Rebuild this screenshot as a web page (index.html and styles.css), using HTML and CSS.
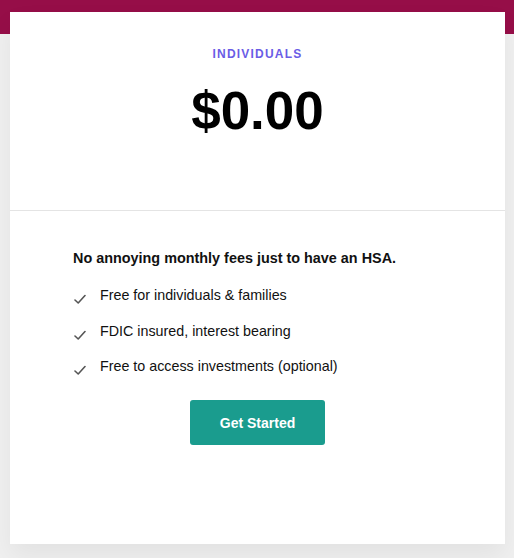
FILE: index.html
```html
<!DOCTYPE html>
<html>
<head>
<meta charset="utf-8">
<link rel="stylesheet" href="styles.css">
</head>
<body>
<div class="band"></div>
<main class="card">
  <section class="top">
    <div class="tier">INDIVIDUALS</div>
    <div class="price">$0.00</div>
  </section>
  <section class="bottom">
    <h2 class="lead">No annoying monthly fees just to have an HSA.</h2>
    <ul class="features">
      <li><svg class="check" viewBox="0 0 12 10" width="12" height="10"><path d="M1 6 L4.2 9 L11 1.5" fill="none" stroke="#555" stroke-width="1.6" stroke-linecap="round" stroke-linejoin="round"/></svg><span>Free for individuals &amp; families</span></li>
      <li><svg class="check" viewBox="0 0 12 10" width="12" height="10"><path d="M1 6 L4.2 9 L11 1.5" fill="none" stroke="#555" stroke-width="1.6" stroke-linecap="round" stroke-linejoin="round"/></svg><span>FDIC insured, interest bearing</span></li>
      <li><svg class="check" viewBox="0 0 12 10" width="12" height="10"><path d="M1 6 L4.2 9 L11 1.5" fill="none" stroke="#555" stroke-width="1.6" stroke-linecap="round" stroke-linejoin="round"/></svg><span>Free to access investments (optional)</span></li>
    </ul>
    <div class="cta-row"><a class="cta" href="#">Get Started</a></div>
  </section>
</main>
</body>
</html>
```
FILE: styles.css
```css
* { box-sizing: border-box; }
html, body { margin: 0; padding: 0; }
body {
  background: #f0f0f0;
  font-family: "Liberation Sans", Arial, sans-serif;
  color: #111;
  width: 514px;
  height: 558px;
  overflow: hidden;
  position: relative;
}
.band {
  height: 34px;
  background: #960e48;
}
.card {
  position: absolute;
  left: 10px;
  top: 12px;
  width: 495px;
  height: 532px;
  background: #fff;
  box-shadow: 0 12px 24px rgba(0,0,0,0.06);
}
.top {
  height: 199px;
  border-bottom: 1px solid #e4e4e4;
  display: flex;
  flex-direction: column;
  align-items: center;
  padding-top: 35px;
}
.tier {
  font-size: 12px;
  line-height: 14px;
  font-weight: 700;
  letter-spacing: 1.2px;
  color: #6a5ce6;
}
.price {
  margin-top: 19px;
  font-size: 53px;
  font-weight: 700;
  line-height: 61px;
  color: #000;
}
.bottom {
  padding: 39px 63px 0;
}
.lead {
  margin: 0;
  font-size: 14.4px;
  line-height: 16px;
  font-weight: 700;
  color: #111;
}
.features {
  list-style: none;
  margin: 19px 0 0;
  padding: 0;
}
.features li {
  display: flex;
  align-items: center;
  height: 20px;
  margin-bottom: 15.5px;
  font-size: 14.3px;
  color: #111;
}
.check {
  margin-left: 1px;
  margin-right: 14px;
  margin-top: 8px;
  flex: none;
}
.cta-row {
  display: flex;
  justify-content: center;
  margin-top: 24px;
}
.cta {
  display: flex;
  align-items: center;
  justify-content: center;
  width: 135px;
  height: 45px;
  border-radius: 3px;
  background: #1a9c8e;
  color: #fff;
  font-size: 14px;
  font-weight: 700;
  text-decoration: none;
}
```
